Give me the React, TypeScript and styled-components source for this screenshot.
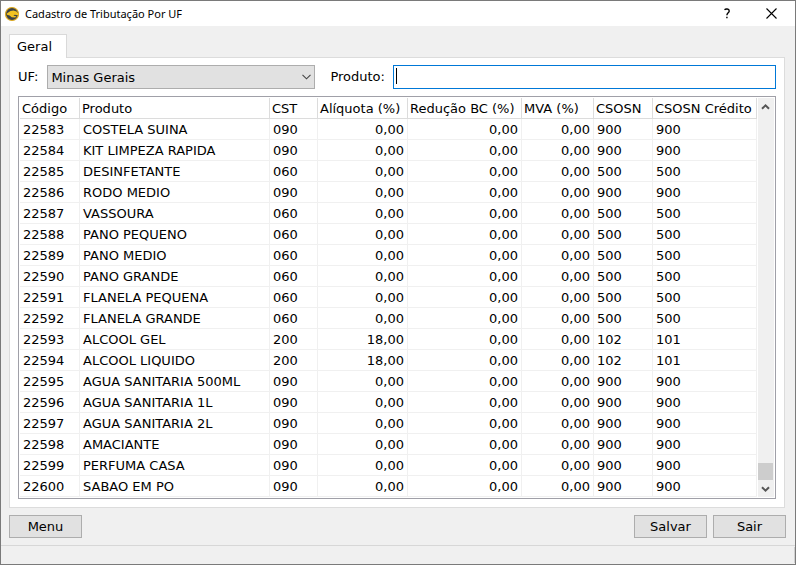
import React from "react";
import styled, { createGlobalStyle } from "styled-components";

const GlobalStyle = createGlobalStyle`
  *, *::before, *::after { box-sizing: border-box; }
  body { margin: 0; }
  body, button, input, select, table {
    font-family: Verdana, "DejaVu Sans", sans-serif;
    font-size: 13px;
    color: #000;
  }
`;

const Window = styled.div`
  display: flex;
  flex-direction: column;
  min-height: 100vh;
  border: 1px solid #7a7a7a;
  background: #f0f0f0;
`;

const TitleBar = styled.header`
  display: flex;
  align-items: center;
  height: 25px;
  padding-left: 3px;
  background: #fff;
`;

const Title = styled.h1`
  flex: 1;
  margin: 0 0 0 5px;
  font: 400 11px/24px "Segoe UI", "Noto Sans", sans-serif;
`;

const CaptionButton = styled.button`
  display: flex;
  align-items: center;
  justify-content: center;
  width: 45px;
  height: 25px;
  padding: 0 2px 0 0;
  border: 0;
  background: transparent;
`;

const Content = styled.main`
  flex: 1;
  display: flex;
  flex-direction: column;
  padding: 8px 9px 7px 8px;
`;

const TabList = styled.div`
  display: flex;
  height: 23px;
`;

const Tab = styled.button`
  z-index: 1;
  width: 58px;
  height: 24px;
  padding: 0 7px;
  border: 1px solid #d9d9d9;
  border-bottom: 0;
  background: #fff;
  text-align: left;
  line-height: 20px;
`;

const TabPanel = styled.section`
  flex: 1;
  display: flex;
  flex-direction: column;
  gap: 7px;
  margin-right: 1px;
  padding: 7px 8px 8px;
  border: 1px solid #dcdcdc;
  background: #fff;
`;

const Filters = styled.div`
  display: flex;
  align-items: center;
`;

const Label = styled.label<{ $gap: number }>`
  margin-right: ${(p) => p.$gap}px;
  line-height: 22px;
`;

const SelectBox = styled.div`
  display: grid;
  width: 268px;
  margin-right: 15px;
  > * { grid-area: 1 / 1; }
  > svg { place-self: center end; margin-right: 4px; pointer-events: none; }
`;

const Select = styled.select`
  appearance: none;
  width: 100%;
  height: 24px;
  padding: 0 20px 0 3px;
  border: 1px solid #adadad;
  border-radius: 0;
  outline: 0;
  background: #e1e1e1;
`;

const SearchInput = styled.input`
  flex: 1;
  min-width: 0;
  height: 24px;
  padding: 0 3px;
  border: 1px solid #0078d7;
  outline: 0;
  background: #fff;
  caret-color: transparent;
  &:placeholder-shown {
    background: #fff linear-gradient(#000, #000) 2px 2px / 1px 16px no-repeat;
  }
`;

const GridFrame = styled.div`
  flex: 1;
  display: flex;
  gap: 1px;
  padding: 1px;
  border: 1px solid #a0a0a8;
`;

const Table = styled.table`
  flex: 1;
  min-width: 0;
  align-self: flex-start;
  table-layout: fixed;
  border-collapse: separate;
  border-spacing: 0;
  white-space: nowrap;
`;

const HeadCell = styled.th`
  height: 21px;
  padding: 2px 0 0 2px;
  border: solid #dcdcdc;
  border-width: 0 1px 1px 0;
  font-weight: 400;
  text-align: left;
  line-height: 18px;
`;

const Cell = styled.td<{ $right?: boolean }>`
  height: 21px;
  padding: 2px 3px 0;
  border: solid #f0f0f0;
  border-width: 0 1px 1px 0;
  text-align: ${(p) => (p.$right ? "right" : "left")};
  line-height: 18px;
`;

const ScrollBar = styled.div`
  display: flex;
  flex-direction: column;
  width: 16px;
  background: #f0f0f0;
`;

const ScrollButton = styled.button`
  display: flex;
  align-items: center;
  justify-content: center;
  width: 16px;
  height: 17px;
  padding: 0 1px 0 0;
  border: 0;
  background: transparent;
`;

const ScrollTrack = styled.div`
  flex: 1;
  display: flex;
  align-items: flex-end;
`;

const ScrollThumb = styled.div`
  width: 15px;
  height: 17px;
  background: #cdcdcd;
`;

const Actions = styled.footer`
  display: flex;
  gap: 6px;
  margin-top: 7px;
`;

const Spacer = styled.div`
  flex: 1;
`;

const Button = styled.button`
  width: 73px;
  height: 23px;
  padding: 0;
  border: 1px solid #adadad;
  background: #e1e1e1;
`;

const StatusBar = styled.div`
  height: 19px;
  border-top: 1px solid #d7d7d7;
  &::after {
    content: "";
    display: block;
    height: 16px;
    margin-top: 1px;
    border-right: 1px solid #d0d0d0;
  }
`;

const columns = [
  { name: "Código", width: 60 },
  { name: "Produto" },
  { name: "CST", width: 48 },
  { name: "Alíquota (%)", width: 90, right: true },
  { name: "Redução BC (%)", width: 114, right: true },
  { name: "MVA (%)", width: 72, right: true },
  { name: "CSOSN", width: 59 },
  { name: "CSOSN Crédito", width: 104 },
];

const row = (code: number, name: string, cst: string, rate: string, csosn: string, credit: string) => [
  String(code), name, cst, rate, "0,00", "0,00", csosn, credit,
];

const rows = [
  row(22583, "COSTELA SUINA", "090", "0,00", "900", "900"),
  row(22584, "KIT LIMPEZA RAPIDA", "090", "0,00", "900", "900"),
  row(22585, "DESINFETANTE", "060", "0,00", "500", "500"),
  row(22586, "RODO MEDIO", "090", "0,00", "900", "900"),
  row(22587, "VASSOURA", "060", "0,00", "500", "500"),
  row(22588, "PANO PEQUENO", "060", "0,00", "500", "500"),
  row(22589, "PANO MEDIO", "060", "0,00", "500", "500"),
  row(22590, "PANO GRANDE", "060", "0,00", "500", "500"),
  row(22591, "FLANELA PEQUENA", "060", "0,00", "500", "500"),
  row(22592, "FLANELA GRANDE", "060", "0,00", "500", "500"),
  row(22593, "ALCOOL GEL", "200", "18,00", "102", "101"),
  row(22594, "ALCOOL LIQUIDO", "200", "18,00", "102", "101"),
  row(22595, "AGUA SANITARIA 500ML", "090", "0,00", "900", "900"),
  row(22596, "AGUA SANITARIA 1L", "090", "0,00", "900", "900"),
  row(22597, "AGUA SANITARIA 2L", "090", "0,00", "900", "900"),
  row(22598, "AMACIANTE", "090", "0,00", "900", "900"),
  row(22599, "PERFUMA CASA", "090", "0,00", "900", "900"),
  row(22600, "SABAO EM PO", "090", "0,00", "900", "900"),
];

const Logo = () => (
  <svg width="16" height="16" viewBox="0 0 16 16" aria-hidden="true">
    <circle cx="8" cy="8" r="6.5" fill="#3d4347" stroke="#e0aa1c" strokeWidth="1.2" />
    <path d="M2.8 7.4 6.5 5 9.5 4.4l3 1 2.2 2.6-.8 1.2-3.2-.5-1.4.9 3.2.8-1.4 1-3.4-.2L5.6 9.4 3 8.8z" fill="#f3c321" />
  </svg>
);

const Chevron = ({ up = false }: { up?: boolean }) => (
  <svg width="9" height="8" viewBox="0 0 9 8" fill="none" stroke="#555" strokeWidth="2" aria-hidden="true">
    <path d={up ? "M1 5.8 4.5 2.3 8 5.8" : "M1 2.2 4.5 5.7 8 2.2"} />
  </svg>
);

export default function App() {
  return (
    <>
      <GlobalStyle />
      <Window>
        <TitleBar>
          <Logo />
          <Title>Cadastro de Tributação Por UF</Title>
          <CaptionButton aria-label="Ajuda">
            <svg width="8" height="11" viewBox="0 0 8 11" fill="none" stroke="#000" strokeWidth="1.4" aria-hidden="true">
              <path d="M1.5 1.7C2.5.8 6.2.4 6.2 2.9 6.2 4.8 3.9 4.8 3.9 7.2M3.9 8.8v1.5" />
            </svg>
          </CaptionButton>
          <CaptionButton aria-label="Fechar">
            <svg width="11" height="11" viewBox="0 0 11 11" stroke="#000" strokeWidth="1.1" aria-hidden="true">
              <path d="M.5.5 10.5 10.5M10.5.5.5 10.5" />
            </svg>
          </CaptionButton>
        </TitleBar>
        <Content>
          <TabList role="tablist">
            <Tab role="tab" id="tab-geral" aria-selected="true" aria-controls="panel-geral">Geral</Tab>
          </TabList>
          <TabPanel role="tabpanel" id="panel-geral" aria-labelledby="tab-geral">
            <Filters>
              <Label $gap={9} htmlFor="uf">UF:</Label>
              <SelectBox>
                <Select id="uf" defaultValue="MG">
                  <option value="MG">Minas Gerais</option>
                </Select>
                <svg width="9" height="6" viewBox="0 0 9 6" fill="none" stroke="#444" strokeWidth="1.1" aria-hidden="true">
                  <path d="M.5.8 4.5 4.8 8.5.8" />
                </svg>
              </SelectBox>
              <Label $gap={8} htmlFor="produto">Produto:</Label>
              <SearchInput id="produto" type="text" placeholder=" " />
            </Filters>
            <GridFrame>
              <Table>
                <colgroup>
                  {columns.map((c) => <col key={c.name} width={c.width} />)}
                </colgroup>
                <thead>
                  <tr>
                    {columns.map((c) => <HeadCell key={c.name} scope="col">{c.name}</HeadCell>)}
                  </tr>
                </thead>
                <tbody>
                  {rows.map((r) => (
                    <tr key={r[0]}>
                      {r.map((v, i) => <Cell key={i} $right={columns[i].right}>{v}</Cell>)}
                    </tr>
                  ))}
                </tbody>
              </Table>
              <ScrollBar>
                <ScrollButton aria-label="Rolar para cima"><Chevron up /></ScrollButton>
                <ScrollTrack><ScrollThumb /></ScrollTrack>
                <ScrollButton aria-label="Rolar para baixo"><Chevron /></ScrollButton>
              </ScrollBar>
            </GridFrame>
          </TabPanel>
          <Actions>
            <Button>Menu</Button>
            <Spacer />
            <Button>Salvar</Button>
            <Button>Sair</Button>
          </Actions>
        </Content>
        <StatusBar />
      </Window>
    </>
  );
}
